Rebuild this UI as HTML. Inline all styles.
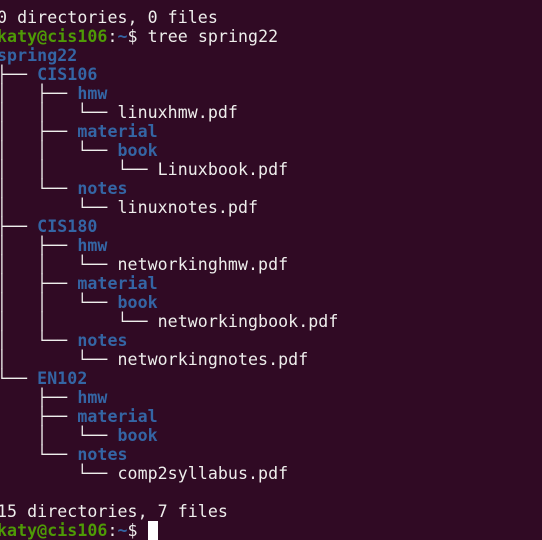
<!DOCTYPE html>
<html><head><meta charset="utf-8"><style>
html,body{margin:0;padding:0;background:#300a24;width:542px;height:526px;overflow:hidden}
pre{margin:0;position:absolute;left:-3px;top:8px;font-family:"DejaVu Sans Mono","Liberation Mono",monospace;font-size:16.6px;line-height:19px;color:#eeeeec;letter-spacing:0.05px}
.b{color:#3465a4;font-weight:bold}
.g{color:#4e9a06;font-weight:bold}
.c{background:#fff}
</style></head><body><pre>0 directories, 0 files
<span class="g">katy@cis106</span>:<span class="b">~</span>$ tree spring22
<span class="b">spring22</span>
├── <span class="b">CIS106</span>
│   ├── <span class="b">hmw</span>
│   │   └── linuxhmw.pdf
│   ├── <span class="b">material</span>
│   │   └── <span class="b">book</span>
│   │       └── Linuxbook.pdf
│   └── <span class="b">notes</span>
│       └── linuxnotes.pdf
├── <span class="b">CIS180</span>
│   ├── <span class="b">hmw</span>
│   │   └── networkinghmw.pdf
│   ├── <span class="b">material</span>
│   │   └── <span class="b">book</span>
│   │       └── networkingbook.pdf
│   └── <span class="b">notes</span>
│       └── networkingnotes.pdf
└── <span class="b">EN102</span>
    ├── <span class="b">hmw</span>
    ├── <span class="b">material</span>
    │   └── <span class="b">book</span>
    └── <span class="b">notes</span>
        └── comp2syllabus.pdf

15 directories, 7 files
<span class="g">katy@cis106</span>:<span class="b">~</span>$ <span class="c"> </span></pre></body></html>
